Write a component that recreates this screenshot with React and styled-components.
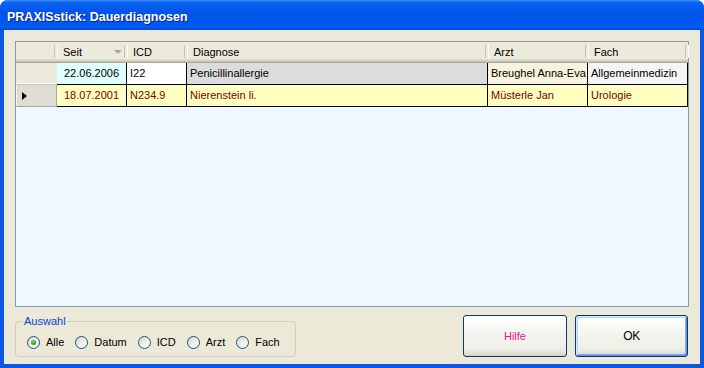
import React from 'react';
import styled, { createGlobalStyle } from 'styled-components';

const GlobalStyle = createGlobalStyle`
  html, body { margin: 0; padding: 0; background: #ffffff; }
  body { font-family: "Liberation Sans", Arial, sans-serif; }
  * { box-sizing: border-box; }
`;

const Window = styled.div`
  width: 704px;
  height: 368px;
  display: flex;
  flex-direction: column;
  border-radius: 8px 8px 0 0;
  overflow: hidden;
  background: #0b57e4;
`;

const TitleBar = styled.div`
  height: 30px;
  flex: none;
  display: flex;
  align-items: center;
  padding: 3px 0 0 7px;
  background: linear-gradient(180deg, #3d95ff 0%, #0a62f0 8%, #0055ea 40%, #0058ee 80%, #005bf2 92%, #0046d6 100%);
  color: #ffffff;
  font-family: "Liberation Sans", Arial, sans-serif;
  font-weight: bold;
  font-size: 12.5px;
  text-shadow: 1px 1px 0 #0a1a8a;
`;

const Client = styled.div`
  flex: 1;
  margin: 0 4px 4px 4px;
  background: #ece9d8;
  display: flex;
  flex-direction: column;
  padding: 11px 11px 7px 11px;
`;

const cols = '41px 70px 60px 301px 100px 100px';

const Grid = styled.div`
  height: 266px;
  flex: none;
  border: 1px solid #7f9db9;
  background: #f0f8ff;
  display: flex;
  flex-direction: column;
  font-size: 11px;
`;

const HeaderRow = styled.div`
  display: grid;
  grid-template-columns: ${cols};
  height: 20px;
  background: #ebeadb;
  box-shadow: inset 0 -1px 0 #cbc7b8, inset 0 -2px 0 #d6d2c2, inset 0 -3px 0 #e2decd;
`;

const HeaderCell = styled.div`
  position: relative;
  display: flex;
  align-items: center;
  padding-left: 6px;
  line-height: 20px;
  color: #000;
  white-space: nowrap;
  &::after {
    content: '';
    position: absolute;
    right: -1px;
    top: 3px;
    bottom: 4px;
    width: 2px;
    border-left: 1px solid #c7c5b2;
    border-right: 1px solid #ffffff;
  }
`;

const SortArrow = styled.span`
  margin-left: auto;
  margin-right: 5px;
  width: 0;
  height: 0;
  border-left: 4.5px solid transparent;
  border-right: 4.5px solid transparent;
  border-top: 4px solid #aca899;
`;

const DataRow = styled.div`
  display: grid;
  grid-template-columns: ${cols};
  height: ${p => p.$h}px;
  border-top: ${p => (p.$first ? '1px solid #a5a497' : 'none')};
`;

const Selector = styled.div`
  display: flex;
  align-items: center;
  padding-left: 6px;
  background: ${p => (p.$current ? '#deddd5' : '#ebeadb')};
  border-bottom: 1px solid ${p => (p.$current ? '#aca899' : '#c9c7ba')};
  border-right: 1px solid ${p => (p.$current ? '#aca899' : '#ebeadb')};
  box-shadow: ${p => (p.$current ? 'inset 1px 0 0 #f4f3ee' : 'inset 0 -1px 0 #ffffff')};
`;

const RowPointer = styled.span`
  width: 0;
  height: 0;
  border-left: 5px solid #000;
  border-top: 4.5px solid transparent;
  border-bottom: 4.5px solid transparent;
`;

const Cell = styled.div`
  background: ${p => p.$bg};
  color: ${p => p.$fg};
  border-right: 1px solid #000;
  border-bottom: 1px solid #000;
  line-height: 21px;
  padding-left: ${p => (p.$center ? '0' : '3px')};
  text-align: ${p => (p.$center ? 'center' : 'left')};
  white-space: nowrap;
  overflow: hidden;
`;

const BottomBar = styled.div`
  display: flex;
  align-items: flex-start;
  height: 42px;
  margin-top: 8px;
  flex: none;
`;

const GroupBox = styled.div`
  margin-top: 6px;
  width: 281px;
  height: 36px;
  border: 1px solid #d0d0bf;
  border-radius: 4px;
  padding: 0 0 7px 11px;
`;

const Legend = styled.div`
  margin: -7px 0 0 -4px;
  padding: 0 1px;
  width: fit-content;
  background: #ece9d8;
  color: #0046d5;
  font-size: 11px;
  line-height: 13px;
`;

const RadioRow = styled.div`
  display: flex;
  align-items: center;
  gap: 11px;
  height: 14px;
  margin-top: 7px;
`;

const RadioItem = styled.label`
  display: flex;
  align-items: center;
  gap: 6px;
  font-size: 11px;
  color: #000;
`;

const RadioCircle = styled.span`
  width: 13px;
  height: 13px;
  border-radius: 50%;
  border: 1px solid #1c5180;
  background: linear-gradient(135deg, #d4d4cc 0%, #ececE6 45%, #ffffff 100%);
  display: flex;
  align-items: center;
  justify-content: center;
`;

const RadioDot = styled.span`
  width: 5px;
  height: 5px;
  border-radius: 50%;
  background: radial-gradient(circle at 40% 35%, #62dc5e 0%, #2ba82b 60%, #1a8a1a 100%);
`;

const Button = styled.button`
  width: ${p => p.$w}px;
  height: 42px;
  margin-left: ${p => p.$ml || '0'};
  margin-right: ${p => p.$mr || '0'};
  border: 1px solid #003c74;
  border-radius: 3px;
  padding: 0;
  background: linear-gradient(180deg, #ffffff 0%, #f6f6f2 35%, #efeee8 80%, #e4e1d8 92%, #d6d0c5 100%);
  font-family: "Liberation Sans", Arial, sans-serif;
  font-size: ${p => p.$fs}px;
  letter-spacing: ${p => p.$ls || '0'};
  color: ${p => p.$color};
  box-shadow: ${p =>
    p.$default
      ? 'inset 1px 1px 0 #cee7ff, inset -1px -1px 0 #6982ee, inset 2px 2px 0 #bcd4f6, inset -2px -2px 0 #89ade4'
      : 'none'};
`;

const rows = [
  {
    current: false,
    cells: [
      { t: '22.06.2006', bg: '#e0ffff', fg: '#000', center: true },
      { t: 'I22', bg: '#ffffff', fg: '#000' },
      { t: 'Penicillinallergie', bg: '#dcdcdc', fg: '#000' },
      { t: 'Breughel Anna-Eva', bg: '#f5f5dc', fg: '#000' },
      { t: 'Allgemeinmedizin', bg: '#f5f5f5', fg: '#000' },
    ],
  },
  {
    current: true,
    cells: [
      { t: '18.07.2001', bg: '#ffffc0', fg: '#800000', center: true },
      { t: 'N234.9', bg: '#ffffc0', fg: '#800000' },
      { t: 'Nierenstein li.', bg: '#ffffc0', fg: '#800000' },
      { t: 'Müsterle Jan', bg: '#ffffc0', fg: '#800000' },
      { t: 'Urologie', bg: '#ffffc0', fg: '#800000' },
    ],
  },
];

const radios = ['Alle', 'Datum', 'ICD', 'Arzt', 'Fach'];

export default function App() {
  return (
    <>
      <GlobalStyle />
      <Window>
        <TitleBar>PRAXISstick: Dauerdiagnosen</TitleBar>
        <Client>
          <Grid>
            <HeaderRow>
              <HeaderCell />
              <HeaderCell>
                Seit
                <SortArrow />
              </HeaderCell>
              <HeaderCell>ICD</HeaderCell>
              <HeaderCell>Diagnose</HeaderCell>
              <HeaderCell>Arzt</HeaderCell>
              <HeaderCell>Fach</HeaderCell>
            </HeaderRow>
            {rows.map((r, i) => (
              <DataRow key={i} $first={i === 0} $h={i === 0 ? 23 : 22}>
                <Selector $current={r.current}>{r.current && <RowPointer />}</Selector>
                {r.cells.map((c, j) => (
                  <Cell key={j} $bg={c.bg} $fg={c.fg} $center={c.center}>
                    {c.t}
                  </Cell>
                ))}
              </DataRow>
            ))}
          </Grid>
          <BottomBar>
            <GroupBox>
              <Legend>Auswahl</Legend>
              <RadioRow>
                {radios.map((r, i) => (
                  <RadioItem key={r}>
                    <RadioCircle>{i === 0 && <RadioDot />}</RadioCircle>
                    {r}
                  </RadioItem>
                ))}
              </RadioRow>
            </GroupBox>
            <Button $w={104} $ml="auto" $fs={11} $color="#e0188a">
              Hilfe
            </Button>
            <Button $w={113} $ml="8px" $mr="1px" $fs={12} $ls="-0.5px" $color="#000" $default>
              OK
            </Button>
          </BottomBar>
        </Client>
      </Window>
    </>
  );
}
